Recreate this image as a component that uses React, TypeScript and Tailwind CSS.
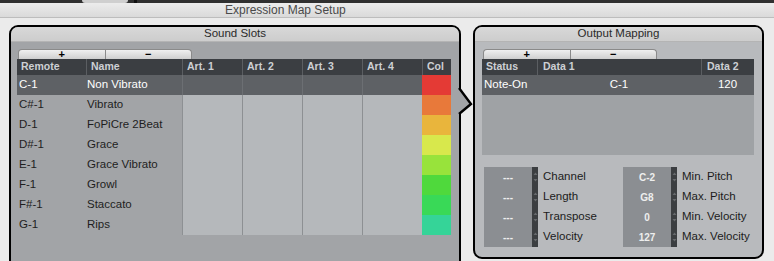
import React from 'react';

const slots = [
  { remote: 'C-1', name: 'Non Vibrato', color: 'bg-[#e43a35]' },
  { remote: 'C#-1', name: 'Vibrato', color: 'bg-[#e8793a]' },
  { remote: 'D-1', name: 'FoPiCre 2Beat', color: 'bg-[#e9b53c]' },
  { remote: 'D#-1', name: 'Grace', color: 'bg-[#d8e84c]' },
  { remote: 'E-1', name: 'Grace Vibrato', color: 'bg-[#98e33b]' },
  { remote: 'F-1', name: 'Growl', color: 'bg-[#4fd93c]' },
  { remote: 'F#-1', name: 'Staccato', color: 'bg-[#39d957]' },
  { remote: 'G-1', name: 'Rips', color: 'bg-[#35d498]' },
];

const leftFields = [
  { value: '---', label: 'Channel' },
  { value: '---', label: 'Length' },
  { value: '---', label: 'Transpose' },
  { value: '---', label: 'Velocity' },
];

const rightFields = [
  { value: 'C-2', label: 'Min. Pitch' },
  { value: 'G8', label: 'Max. Pitch' },
  { value: '0', label: 'Min. Velocity' },
  { value: '127', label: 'Max. Velocity' },
];

const PanelHeader: React.FC<{ title: string }> = ({ title }) => (
  <div className="h-[15px] rounded-t-[7px] bg-gradient-to-b from-[#d8d8d8] to-[#cdcdcd] border-b border-[#b4b4b4] flex items-center justify-center text-[11.5px] leading-none text-[#2a2a2a]">
    {title}
  </div>
);

const PlusMinus: React.FC = () => (
  <div className="flex h-[10px] w-[174px] ml-[1px]">
    <div className="flex-1 rounded-tl-[4px] border-t border-l border-r border-[#8a8a8a] bg-gradient-to-b from-[#f0f0f0] to-[#cfcfcf] flex items-center justify-center text-[11px] leading-none text-black font-bold">
      +
    </div>
    <div className="flex-1 rounded-tr-[4px] border-t border-r border-[#8a8a8a] bg-gradient-to-b from-[#f0f0f0] to-[#cfcfcf] flex items-center justify-center text-[11px] leading-none text-black font-bold">
      −
    </div>
  </div>
);

const Spinner: React.FC = () => (
  <div className="w-[6px] bg-[#3b3e41] flex flex-col">
    {[0, 1, 2, 3].map(i => (
      <div key={i} className="h-[20px] flex items-center justify-center">
        <svg width="5" height="12" viewBox="0 0 5 12">
          <path d="M0.5 4 L2.5 1.5 L4.5 4 Z" fill="#676a6d" />
          <path d="M0.5 8 L2.5 10.5 L4.5 8 Z" fill="#676a6d" />
        </svg>
      </div>
    ))}
  </div>
);

const FieldGroup: React.FC<{ fields: { value: string; label: string }[]; width: string }> = ({ fields, width }) => (
  <div className={`flex ${width}`}>
    <div className="w-[48px] bg-[#8b8e92] flex flex-col">
      {fields.map(f => (
        <div key={f.label} className="h-[20px] flex items-center justify-center text-[10px] font-bold text-[#eeeeee]">
          {f.value}
        </div>
      ))}
    </div>
    <Spinner />
    <div className="flex flex-col pl-[5px]">
      {fields.map(f => (
        <div key={f.label} className="h-[20px] flex items-center text-[11.5px] text-[#1c1c1c]">
          {f.label}
        </div>
      ))}
    </div>
  </div>
);

const App: React.FC = () => {
  return (
    <div className="w-[774px] h-[261px] overflow-hidden bg-[#ebebeb] font-['Liberation_Sans',Arial,sans-serif]">
      {/* strip of the window behind */}
      <div className="h-[3px] bg-[#303030] flex">
        <div className="w-[82px]" />
        <div className="w-[46px] bg-[#cfcfcf] rounded-b-[3px]" />
        <div className="w-[6px]" />
        <div className="w-[3px] bg-[#111]" />
      </div>

      {/* title bar */}
      <div className="h-[15px] bg-gradient-to-b from-[#ececec] to-[#dadada] border-b border-[#bdbdbd] flex items-center pl-[225px] text-[12px] leading-none text-[#4a4a4a]">
        Expression Map Setup
      </div>

      <div className="flex pl-[9px] pt-[7px] gap-[12px]">
        {/* Sound Slots */}
        <div className="relative w-[452px] h-[245px] border-2 border-black rounded-[9px] bg-[#a2a4a7]">
          <PanelHeader title="Sound Slots" />
          <div className="px-[6px] pt-[7px]">
            <PlusMinus />
            <div className="grid grid-cols-[69px_96px_60px_60px_60px_60px_29px] w-[434px] text-[11.5px]">
              {['Remote', 'Name', 'Art. 1', 'Art. 2', 'Art. 3', 'Art. 4', 'Col'].map((h, i) => (
                <div
                  key={h}
                  className={`h-[16px] bg-[#3b3e42] flex items-center text-[10.5px] font-bold text-[#cdd0d4] ${i === 0 ? 'pl-[4px]' : 'pl-[4px] border-l border-[#5b5e62]'}`}
                >
                  {h}
                </div>
              ))}
              {slots.map((s, r) => {
                const sel = r === 0;
                return (
                  <React.Fragment key={s.remote}>
                    <div className={`h-[20px] flex items-center pl-[2px] ${sel ? 'bg-[#5e6165] text-white' : 'text-[#1e1e1e]'}`}>
                      {s.remote}
                    </div>
                    <div className={`h-[20px] flex items-center pl-[1px] ${sel ? 'bg-[#5e6165] text-white' : 'text-[#1e1e1e]'}`}>
                      {s.name}
                    </div>
                    {[0, 1, 2, 3].map(c => (
                      <div
                        key={c}
                        className={`h-[20px] border-l ${sel ? 'bg-[#5e6165] border-[#6c6f73]' : 'bg-[#b5b8bb] border-[#8d9093]'}`}
                      />
                    ))}
                    <div className={`h-[20px] ${s.color}`} />
                  </React.Fragment>
                );
              })}
            </div>
          </div>
          {/* pointer to the output panel */}
          <svg className="absolute left-[446px] top-[60px]" width="16" height="28" viewBox="0 0 16 28">
            <polygon points="0,1 2,1 14,17 2,27 0,27" fill="#a2a4a7" />
            <polyline points="2,1 14,17 2,27" fill="none" stroke="#000" strokeWidth="2.4" />
          </svg>
        </div>

        {/* Output Mapping */}
        <div className="w-[291px] h-[234px] border-2 border-black rounded-[9px] bg-[#b8babd]">
          <PanelHeader title="Output Mapping" />
          <div className="px-[7px] pt-[7px]">
            <PlusMinus />
            <div className="w-[272px] bg-[#9fa2a5] h-[96px]">
              <div className="grid grid-cols-[55px_164px_53px] text-[10.5px] font-bold text-[#cdd0d4]">
                <div className="h-[16px] bg-[#3b3e42] flex items-center pl-[4px]">Status</div>
                <div className="h-[16px] bg-[#3b3e42] flex items-center pl-[5px] border-l border-[#5b5e62]">Data 1</div>
                <div className="h-[16px] bg-[#3b3e42] flex items-center pl-[5px] border-l border-[#5b5e62]">Data 2</div>
              </div>
              <div className="grid grid-cols-[55px_164px_53px] h-[20px] bg-[#5e6165] text-white text-[11.5px]">
                <div className="flex items-center pl-[2px]">Note-On</div>
                <div className="flex items-center justify-center">C-1</div>
                <div className="flex items-center justify-center">120</div>
              </div>
            </div>
            <div className="flex pl-[2px] pt-[12px]">
              <FieldGroup fields={leftFields} width="w-[139px]" />
              <FieldGroup fields={rightFields} width="w-[130px]" />
            </div>
          </div>
        </div>
      </div>
    </div>
  );
};

export default App;
